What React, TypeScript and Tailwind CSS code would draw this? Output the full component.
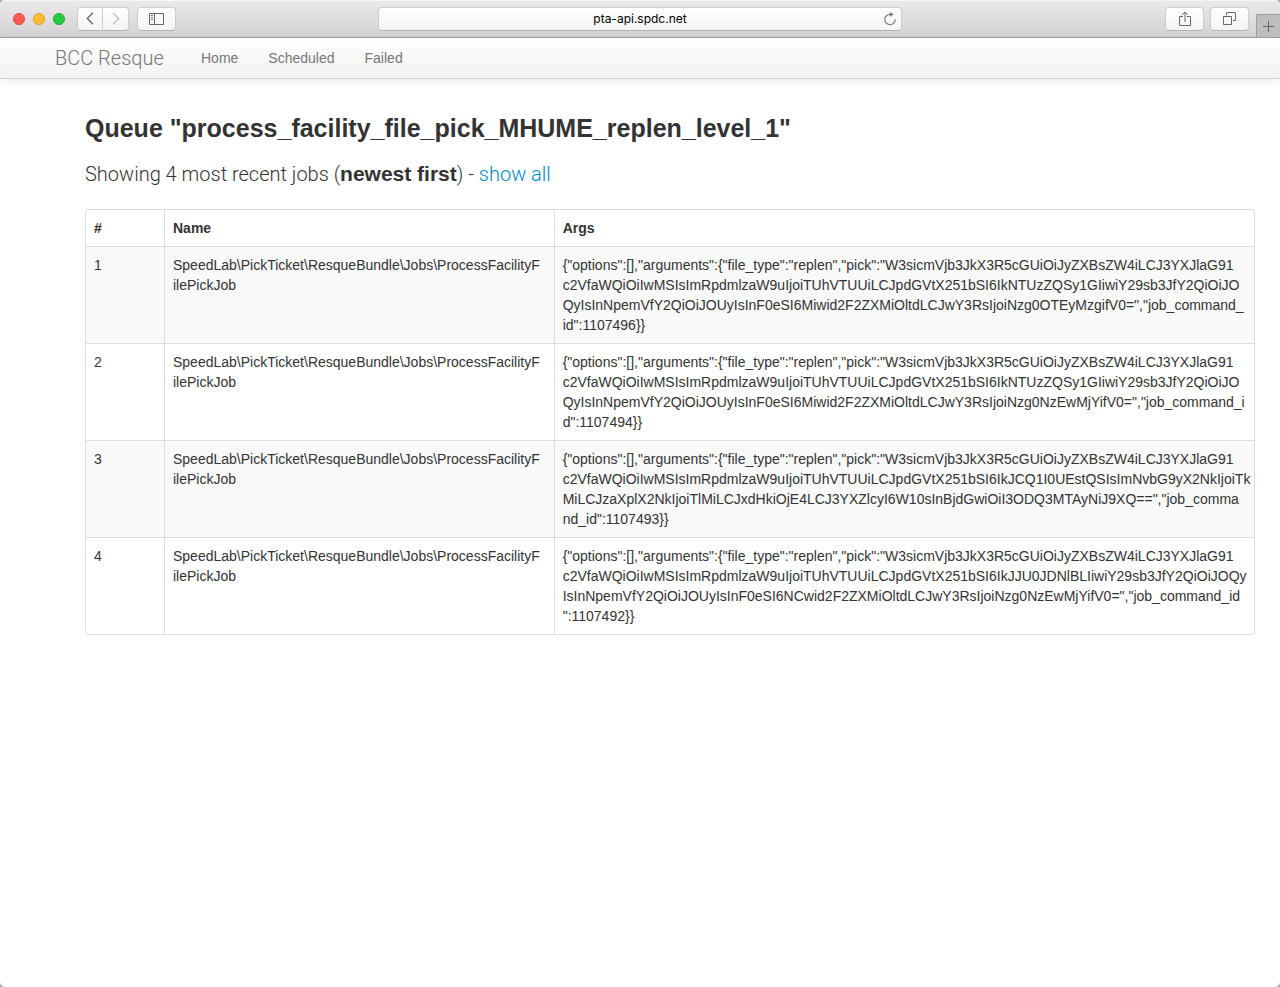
import React from "react";

const JOB_NAME = "SpeedLab\\PickTicket\\ResqueBundle\\Jobs\\ProcessFacilityF\nilePickJob";

const OPENING =
  '{"options":[],"arguments":{"file_type":"replen","pick":"W3sicmVjb3JkX3R5cGUiOiJyZXBsZW4iLCJ3YXJlaG91\n' +
  "c2VfaWQiOiIwMSIsImRpdmlzaW9uIjoiTUhVTUUiLCJpdGVtX251bSI6";

const jobs = [
  {
    id: 1,
    args:
      OPENING +
      "IkNTUzZQSy1GIiwiY29sb3JfY2QiOiJO\n" +
      'QyIsInNpemVfY2QiOiJOUyIsInF0eSI6Miwid2F2ZXMiOltdLCJwY3RsIjoiNzg0OTEyMzgifV0=","job_command_\n' +
      'id":1107496}}',
  },
  {
    id: 2,
    args:
      OPENING +
      "IkNTUzZQSy1GIiwiY29sb3JfY2QiOiJO\n" +
      'QyIsInNpemVfY2QiOiJOUyIsInF0eSI6Miwid2F2ZXMiOltdLCJwY3RsIjoiNzg0NzEwMjYifV0=","job_command_i\n' +
      'd":1107494}}',
  },
  {
    id: 3,
    args:
      OPENING +
      "IkJCQ1I0UEstQSIsImNvbG9yX2NkIjoiTk\n" +
      'MiLCJzaXplX2NkIjoiTlMiLCJxdHkiOjE4LCJ3YXZlcyI6W10sInBjdGwiOiI3ODQ3MTAyNiJ9XQ==","job_comma\n' +
      'nd_id":1107493}}',
  },
  {
    id: 4,
    args:
      OPENING +
      "IkJJU0JDNlBLIiwiY29sb3JfY2QiOiJOQy\n" +
      'IsInNpemVfY2QiOiJOUyIsInF0eSI6NCwid2F2ZXMiOltdLCJwY3RsIjoiNzg0NzEwMjYifV0=","job_command_id\n' +
      '":1107492}}',
  },
];

const toolButton =
  "flex h-6 items-center justify-center border border-[#cfcdcf] border-b-[#b5b3b5] bg-linear-to-b from-white to-[#f4f4f4]";

function Toolbar() {
  return (
    <header className="flex h-[38px] rounded-t-[5px] border-b border-[#a09ea0] bg-linear-to-b from-[#ebe9eb] to-[#d4d2d4] shadow-[inset_0_1px_0_#f6f5f6]">
      <div className="flex flex-1 items-center">
        <div className="ml-[13px] flex gap-2">
          <button aria-label="Close" className="size-3 rounded-full border border-[#e0443e] bg-[#ff5b53]" />
          <button aria-label="Minimize" className="size-3 rounded-full border border-[#dfa023] bg-[#ffbd2e]" />
          <button aria-label="Full screen" className="size-3 rounded-full border border-[#1aab29] bg-[#27ca3f]" />
        </div>
        <div className="ml-3 flex">
          <button aria-label="Back" className={`${toolButton} w-[26px] rounded-l-[4px]`}>
            <svg width="8" height="13" viewBox="0 0 8 13" fill="none" stroke="#666" strokeWidth="1.4">
              <path d="M7 0.8 1.3 6.5 7 12.2" />
            </svg>
          </button>
          <button aria-label="Forward" className={`${toolButton} w-[26px] rounded-r-[4px] border-l-0`}>
            <svg width="8" height="13" viewBox="0 0 8 13" fill="none" stroke="#c0c0c0" strokeWidth="1.4">
              <path d="M1 0.8 6.7 6.5 1 12.2" />
            </svg>
          </button>
        </div>
        <button aria-label="Show sidebar" className={`${toolButton} ml-2 w-[39px] rounded-[4px]`}>
          <svg width="15" height="12" viewBox="0 0 15 12" fill="none" stroke="#666">
            <path d="M.5.5h14v11H.5zM5.5.5v11M2 2.5h2M2 4.5h2M2 6.5h2" />
          </svg>
        </button>
      </div>
      <div className="relative flex w-[41%] items-center">
        <input
          aria-label="Address"
          defaultValue="pta-api.spdc.net"
          className="h-6 w-full rounded-[4px] border border-[#cfcdcf] border-b-[#b5b3b5] bg-linear-to-b from-white to-[#f4f4f4] text-center font-[Inter,sans-serif] text-[12px] text-black outline-none"
        />
        <button aria-label="Reload" className="absolute right-[5px] flex size-[14px] items-center justify-center">
          <svg width="14" height="14" viewBox="0 0 14 14" fill="none" stroke="#777" strokeWidth="1.1">
            <path d="M12.2 7.3A5.2 5.2 0 1 1 7.2 2.3" />
            <path d="M6.7 0v4.8L10.6 2.4z" fill="#777" stroke="none" />
          </svg>
        </button>
      </div>
      <div className="flex flex-1 items-center justify-end">
        <button aria-label="Share" className={`${toolButton} w-[39px] rounded-[4px]`}>
          <svg width="12" height="16" viewBox="0 0 12 16" fill="none" stroke="#666">
            <path d="M4 5.5H.5v9h11v-9H8M6 11V1M3.3 3.7 6 1l2.7 2.7" />
          </svg>
        </button>
        <button aria-label="Show all tabs" className={`${toolButton} mr-[7px] ml-[6px] w-[39px] rounded-[4px]`}>
          <svg width="13" height="13" viewBox="0 0 13 13" fill="none" stroke="#666">
            <path d="M.5 4.5h8v8h-8zM3.5 3V.5h9v8H10" />
          </svg>
        </button>
        <button
          aria-label="New tab"
          className="flex h-[23px] w-6 items-center justify-center self-end border-t border-l border-[#a09ea0] bg-[#bfbdbf]"
        >
          <svg width="11" height="11" viewBox="0 0 11 11" fill="none" stroke="#666">
            <path d="M5.5 0v11M0 5.5h11" />
          </svg>
        </button>
      </div>
    </header>
  );
}

function Navbar() {
  return (
    <nav className="flex h-[41px] items-center border-b border-[#d4d4d4] bg-linear-to-b from-white to-[#f2f2f2] pl-[55px] text-[#777] shadow-[0_1px_10px_rgba(0,0,0,0.1)]">
      <a href="#" className="w-[111px] font-[Roboto,sans-serif] text-[20px] font-light whitespace-nowrap">
        BCC Resque
      </a>
      <div className="ml-[35px] flex gap-[30px] text-[14px]">
        <a href="#home">Home</a>
        <a href="#scheduled">Scheduled</a>
        <a href="#failed">Failed</a>
      </div>
    </nav>
  );
}

export default function App() {
  return (
    <div className="min-h-screen bg-[#a8a8a8] font-['Liberation_Sans',Arial,sans-serif] text-[14px] leading-5 text-[#333]">
      <div className="min-h-screen rounded-[5px] bg-white">
        <Toolbar />
        <Navbar />
        <main className="pt-[29px] pr-[25px] pb-10 pl-[85px]">
          <h3 className="text-[25px] leading-10 font-bold">Queue "process_facility_file_pick_MHUME_replen_level_1"</h3>
          <p className="mt-[11px] font-[Roboto,sans-serif] text-[20px] leading-[30px] font-light">
            Showing 4 most recent jobs (
            <strong className="font-['Liberation_Sans',Arial,sans-serif] text-[21px] font-bold">newest first</strong>) -{" "}
            <a href="#all" className="text-[#0088cc]">
              show all
            </a>
          </p>
          <table className="mt-5 w-full table-fixed border-separate border-spacing-0 rounded-[4px] border border-l-0 border-[#ddd]">
            <colgroup>
              <col className="w-[79px]" />
              <col className="w-1/3" />
              <col />
            </colgroup>
            <thead>
              <tr className="text-left">
                <th className="rounded-tl-[4px] border-l border-[#ddd] p-2">#</th>
                <th className="border-l border-[#ddd] p-2">Name</th>
                <th className="border-l border-[#ddd] p-2">Args</th>
              </tr>
            </thead>
            <tbody>
              {jobs.map((job) => (
                <tr key={job.id} className="group align-top odd:bg-[#f9f9f9]">
                  <td className="border-t border-l border-[#ddd] p-2 group-last:rounded-bl-[4px]">{job.id}</td>
                  <td className="border-t border-l border-[#ddd] p-2 whitespace-pre">{JOB_NAME}</td>
                  <td className="border-t border-l border-[#ddd] p-2 whitespace-pre">{job.args}</td>
                </tr>
              ))}
            </tbody>
          </table>
        </main>
      </div>
    </div>
  );
}
